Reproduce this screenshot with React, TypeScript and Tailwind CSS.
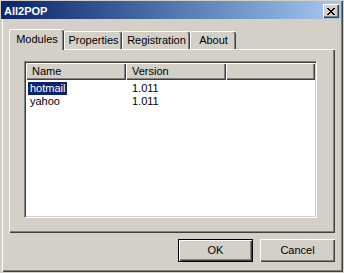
const tabs = [
  { label: 'Modules', w: 'w-[55px]', active: true },
  { label: 'Properties', w: 'w-[58px]', active: false },
  { label: 'Registration', w: 'w-[68px]', active: false },
  { label: 'About', w: 'w-[46px]', active: false },
]

const modules = [
  { name: 'hotmail', version: '1.011', selected: true },
  { name: 'yahoo', version: '1.011', selected: false },
]

const raised =
  'shadow-[inset_1px_1px_0_#ffffff,inset_-1px_-1px_0_#404040,inset_-2px_-2px_0_#808080]'

function CloseGlyph() {
  // classic 8x7 pixel cross
  const px = [
    [0, 0], [1, 0], [6, 0], [7, 0],
    [1, 1], [2, 1], [5, 1], [6, 1],
    [2, 2], [3, 2], [4, 2], [5, 2],
    [3, 3], [4, 3],
    [2, 4], [3, 4], [4, 4], [5, 4],
    [1, 5], [2, 5], [5, 5], [6, 5],
    [0, 6], [1, 6], [6, 6], [7, 6],
  ]
  return (
    <svg width="8" height="7" viewBox="0 0 8 7" shapeRendering="crispEdges">
      {px.map(([x, y]) => (
        <rect key={`${x}-${y}`} x={x} y={y} width="1" height="1" fill="#000" />
      ))}
    </svg>
  )
}

export default function App() {
  return (
    <div className="w-[344px] h-[273px] bg-[#d4d0c8] pl-[1px] pt-[1px] font-['Liberation_Sans',Arial,sans-serif] text-[11px] leading-[13px] text-black">
      <div className="w-[342px] h-[271px] flex flex-col shadow-[inset_1px_0_0_#d4d0c8,inset_2px_0_0_#ffffff,inset_-1px_-1px_0_#404040,inset_-2px_-2px_0_#808080]">
        {/* title bar */}
        <div className="w-[340px] h-[18px] flex justify-between items-start pl-[3px] pr-[2px] bg-gradient-to-r from-[#0a246a] to-[#a6caf0]">
          <span className="mt-[4px] font-bold text-white">All2POP</span>
          <button className={`mt-[3px] w-[16px] h-[14px] flex items-center justify-center bg-[#d4d0c8] ${raised}`}>
            <CloseGlyph />
          </button>
        </div>

        <div className="pl-[8px] pt-[10px] flex flex-col">
          {/* tabs */}
          <div className="relative z-10 flex items-end h-[20px]">
            {tabs.map((t) =>
              t.active ? (
                <div
                  key={t.label}
                  className={`${t.w} h-[21px] -mb-px bg-[#d4d0c8] border-l border-t border-white rounded-tl-[2px] rounded-tr-[2px] shadow-[inset_-1px_0_0_#404040,inset_-2px_0_0_#808080] pt-[3px] text-center`}
                >
                  {t.label}
                </div>
              ) : (
                <div
                  key={t.label}
                  className={`${t.w} h-[18px] bg-[#d4d0c8] border-l border-t border-white rounded-tl-[2px] rounded-tr-[2px] shadow-[inset_-1px_0_0_#404040,inset_-2px_0_0_#808080] pt-[2px] text-center`}
                >
                  {t.label}
                </div>
              ),
            )}
          </div>

          {/* tab page */}
          <div className="w-[326px] h-[184px] border-t border-l border-white shadow-[inset_-1px_-1px_0_#404040,inset_-2px_-2px_0_#808080] pl-[14px] pt-[11px]">
            <div className="w-[293px] h-[157px] bg-white border border-t-[#808080] border-l-[#808080] border-r-white border-b-white shadow-[inset_1px_1px_0_#404040,inset_-1px_-1px_0_#d4d0c8] p-[1px]">
              <div className="flex h-[17px]">
                <div className={`w-[100px] bg-[#d4d0c8] pl-[6px] pt-[2px] ${raised}`}>Name</div>
                <div className={`w-[100px] bg-[#d4d0c8] pl-[6px] pt-[2px] ${raised}`}>Version</div>
                <div className={`w-[89px] bg-[#d4d0c8] ${raised}`} />
              </div>
              <div className="mt-[2px] flex flex-col">
                {modules.map((m) => (
                  <div key={m.name} className="flex h-[13px]">
                    <div className="w-[100px] pl-[2px]">
                      <span className={m.selected ? 'inline-block px-[2px] bg-[#0a246a] text-white' : 'inline-block px-[2px]'}>
                        {m.name}
                      </span>
                    </div>
                    <div className="w-[100px] pl-[6px]">{m.version}</div>
                  </div>
                ))}
              </div>
            </div>
          </div>

          {/* buttons */}
          <div className="w-[326px] mt-[6px] flex justify-end gap-[7px]">
            <button className={`w-[75px] h-[23px] border border-black bg-[#d4d0c8] ${raised}`}>OK</button>
            <button className={`w-[75px] h-[23px] bg-[#d4d0c8] ${raised}`}>Cancel</button>
          </div>
        </div>
      </div>
    </div>
  )
}
